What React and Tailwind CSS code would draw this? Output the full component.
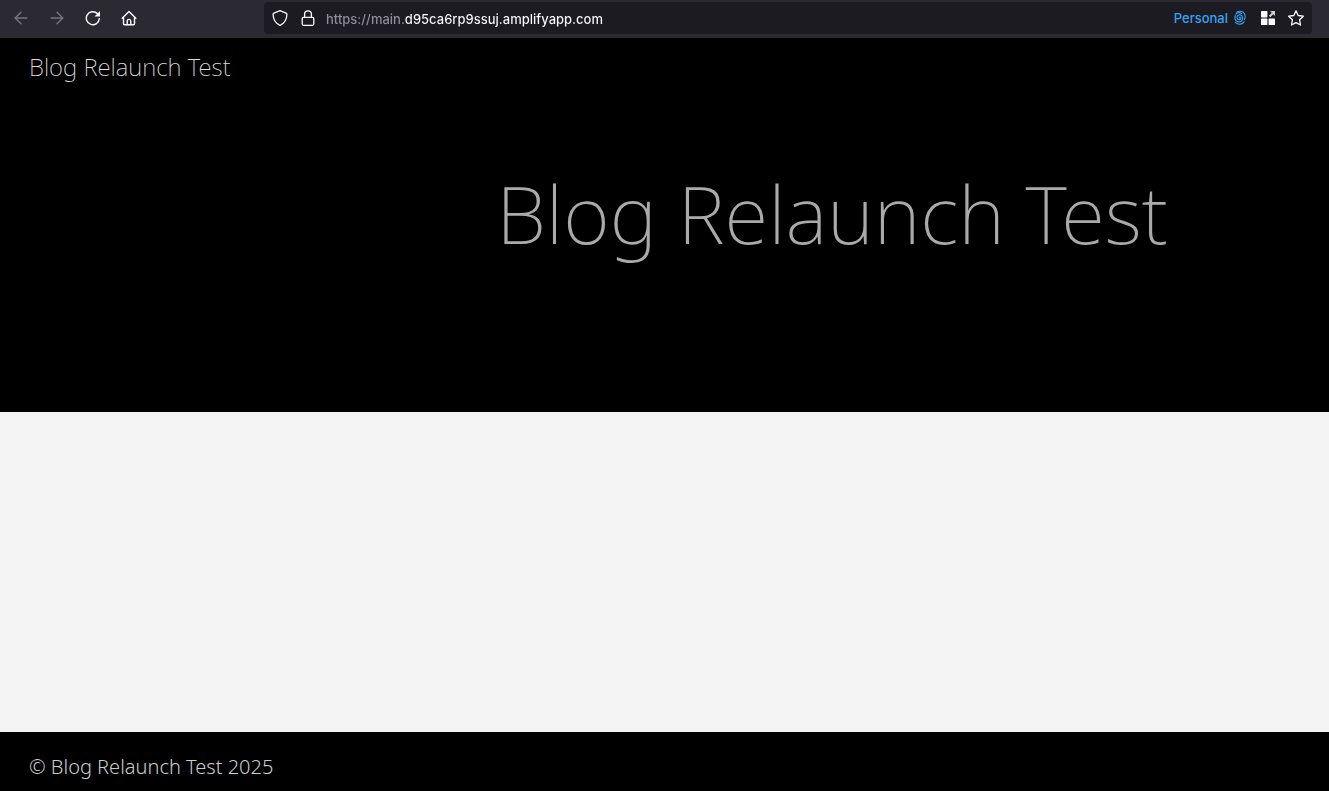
import { ArrowLeft, ArrowRight } from "lucide-react";

const TITLE = "Blog Relaunch Test";

function ReloadIcon() {
  return (
    <svg viewBox="0 0 16 16" className="size-4" fill="none" stroke="currentColor" strokeWidth="1.4" strokeLinecap="round" aria-hidden="true">
      <path d="M14.3 8.6A6.5 6.5 0 1 1 12.4 3.6" />
      <path d="M15 1v5.5H9.5z" fill="currentColor" stroke="none" />
    </svg>
  );
}

function HomeIcon() {
  return (
    <svg viewBox="0 0 16 16" className="size-4" fill="none" stroke="currentColor" strokeWidth="1.4" strokeLinecap="round" strokeLinejoin="round" aria-hidden="true">
      <path d="M1.2 8.3 8 1.6l6.8 6.7M2.5 7.3v6.5c0 .6.4 1 1 1h9c.6 0 1-.4 1-1V7.3" />
      <path d="M6.2 14.6v-3.4a1.8 1.8 0 0 1 3.6 0v3.4" />
    </svg>
  );
}

function ShieldIcon() {
  return (
    <svg viewBox="0 0 16 16" className="size-4" fill="none" stroke="currentColor" strokeWidth="1.3" strokeLinejoin="round" aria-hidden="true">
      <path d="M8 .7 14.1 3.2c.5.2.8.6.8 1.1C14.8 9.6 12.5 13.4 8 15.4 3.5 13.4 1.2 9.6 1.1 4.3c0-.5.3-.9.8-1.1z" />
    </svg>
  );
}

function LockIcon() {
  return (
    <svg viewBox="0 0 16 16" className="size-4" fill="none" stroke="currentColor" strokeWidth="1.3" aria-hidden="true">
      <rect x="2.2" y="7.3" width="11.6" height="8" rx="1.5" />
      <path d="M4.6 7.3V4.2a3.4 3.4 0 0 1 6.8 0v3.1" />
    </svg>
  );
}

function FingerprintIcon() {
  return (
    <svg viewBox="0 0 16 16" className="size-4" fill="none" stroke="currentColor" strokeWidth="1.1" strokeLinecap="round" aria-hidden="true">
      <path d="M4.5 2.2C7.3.6 11 1 12.4 3.6c1 1.9.9 4.400-.2 6.400" />
      <path d="M7.300 8c-.2-.9.9-1.300 1.400-.5.6 1.200-.4 2.500-1.800 2.300-1.700-.2-2.300-1.900-1.800-3.300.6-1.500 2.300-2 3.700-1.400 1.800.8 2.300 2.900 1.500 4.700-.9 1.900-3.100 2.600-5 1.800C3 10.600 2.300 7.800 3.300 5.500" />
      <path d="M3.900 4.200c1.500-1.500 4-1.800 5.800-.7" />
      <path d="M3.400 12.300c1.400 1.600 3.100 2.100 5 1.800 1.600-.2 2.800-1 3.700-2.200" />
    </svg>
  );
}

function ContainersIcon() {
  return (
    <svg viewBox="0 0 16 16" className="size-4" fill="currentColor" aria-hidden="true">
      <rect x="1" y="1" width="6.4" height="6.400" rx=".6" />
      <rect x="1" y="8.600" width="6.400" height="6.400" rx=".6" />
      <rect x="8.600" y="8.600" width="6.400" height="6.400" rx=".6" />
      <path d="M10 1h5v5l-1.700-1.700-3 3L8.800 5.800l3-3z" opacity=".8" />
    </svg>
  );
}

function StarIcon() {
  return (
    <svg viewBox="0 0 16 16" className="size-4" fill="none" stroke="currentColor" strokeWidth="1.3" strokeLinejoin="round" aria-hidden="true">
      <path d="m8 .9 2.200 4.600 5.100.7-3.700 3.600.9 5.200L8 12.600 3.500 15l.9-5.200L.7 6.200l5.100-.7z" />
    </svg>
  );
}

function BrowserBar() {
  return (
    <div className="flex h-[38px] items-center bg-[#2b2a33] pr-[17px] pb-[2px] pl-[11px] font-['Inter','Liberation_Sans',sans-serif] text-[#fbfbfe]">
      <nav aria-label="Browser" className="flex w-[253px] shrink-0 gap-4">
        <button type="button" aria-label="Back" disabled className="flex size-5 items-center justify-center text-[#77767d]">
          <ArrowLeft size={20} strokeWidth={1.6} />
        </button>
        <button type="button" aria-label="Forward" disabled className="flex size-5 items-center justify-center text-[#77767d]">
          <ArrowRight size={20} strokeWidth={1.6} />
        </button>
        <button type="button" aria-label="Reload" className="flex size-5 items-center justify-center">
          <ReloadIcon />
        </button>
        <button type="button" aria-label="Home" className="flex size-5 items-center justify-center">
          <HomeIcon />
        </button>
      </nav>

      <div className="flex h-8 min-w-0 flex-1 items-center gap-2.5 rounded bg-[#1c1b22] px-2">
        <div className="flex gap-3">
          <button type="button" aria-label="Tracking protection">
            <ShieldIcon />
          </button>
          <button type="button" aria-label="Connection security">
            <LockIcon />
          </button>
        </div>
        {/* scheme and subdomain are dimmed, the domain is bright */}
        <input
          type="text"
          aria-label="Address"
          defaultValue="https://main.d95ca6rp9ssuj.amplifyapp.com"
          spellCheck={false}
          className="h-8 min-w-0 flex-1 bg-[linear-gradient(90deg,#8f8f9d_78px,#fbfbfe_78px)] bg-clip-text pt-[2px] text-[13px] font-medium text-transparent outline-none"
        />
        <div className="flex items-center gap-3">
          <button type="button" className="flex items-center gap-1 text-[13px] font-medium text-[#37a2f4]">
            <span className="pt-[2px]">Personal</span>
            <FingerprintIcon />
          </button>
          <button type="button" aria-label="Containers">
            <ContainersIcon />
          </button>
          <button type="button" aria-label="Bookmark this page">
            <StarIcon />
          </button>
        </div>
      </div>
    </div>
  );
}

export default function App() {
  return (
    <div className="flex min-h-screen flex-col bg-[#f4f4f4] font-['Noto_Sans','Open_Sans',sans-serif]">
      <BrowserBar />

      <header className="bg-black px-[29px] pt-[11px] pb-[139px]">
        <a href="#" className="text-2xl leading-9 font-extralight text-[#dddddd]">
          {TITLE}
        </a>
        <h1 className="mt-[68px] pr-33 text-right text-[80px] leading-[120px] font-extralight text-[#aaaaaa]">
          {TITLE}
        </h1>
      </header>

      <main className="flex-1" />

      <footer className="bg-black px-[29px] pt-[21px] pb-[11px]">
        <p className="text-xl leading-[27px] font-light text-[#cccccc]">© {TITLE} 2025</p>
      </footer>
    </div>
  );
}
